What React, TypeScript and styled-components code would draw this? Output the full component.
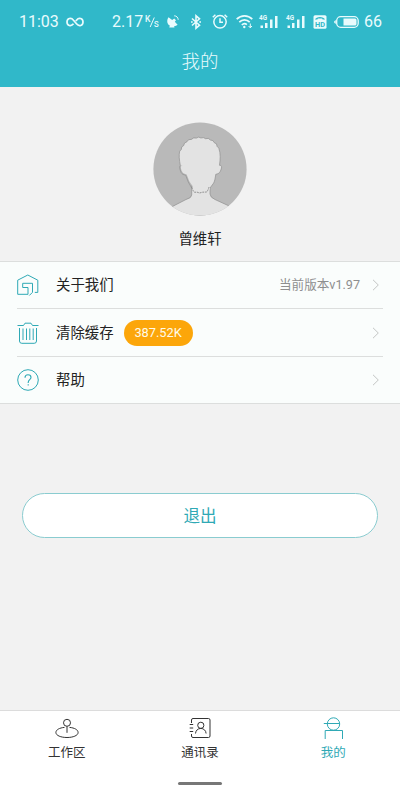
import React from 'react';
import styled, { createGlobalStyle } from 'styled-components';

const TEAL = '#2fa9b5';

const GlobalStyle = createGlobalStyle`
  * { box-sizing: border-box; }
  body {
    margin: 0;
    background: #f2f2f2;
    font-family: Roboto, "Noto Sans CJK SC", sans-serif;
    color: #222;
  }
`;

const Screen = styled.div`
  width: 400px;
  height: 800px;
  display: flex;
  flex-direction: column;
  overflow: hidden;
  background: #f2f2f2;
`;

const Header = styled.header`
  height: 87px;
  flex: none;
  background: #30b8c9;
  color: #e9fbfd;
`;

const StatusBar = styled.div`
  height: 43px;
  display: flex;
  align-items: center;
  padding-left: 19px;
`;

const StatusItem = styled.span<{ $width: number; $gap?: number }>`
  flex: none;
  width: ${p => p.$width}px;
  margin-left: ${p => p.$gap ?? 0}px;
  font-size: 16px;
  line-height: 19px;
  white-space: nowrap;
  svg { display: block; overflow: visible; }
`;

const Title = styled.h1`
  margin: 0;
  height: 38px;
  line-height: 38px;
  text-align: center;
  font-size: 18.5px;
  font-weight: 300;
`;

const Profile = styled.section`
  height: 174px;
  flex: none;
  padding-top: 35px;
  display: flex;
  flex-direction: column;
  align-items: center;
  svg { display: block; }
`;

const Name = styled.div`
  margin-top: 13px;
  line-height: 22px;
  font-size: 14.4px;
`;

const Menu = styled.ul`
  margin: 0;
  padding: 0 17px;
  height: 143px;
  flex: none;
  list-style: none;
  background: #fafdfc;
  border-top: 1px solid #dcdedd;
  border-bottom: 1px solid #dcdedd;
`;

const MenuRow = styled.li`
  height: 48px;
  display: flex;
  align-items: center;
  &:first-child { height: 46px; }
  & + & { border-top: 1px solid #dcdedd; }
  & + & + & { height: 47px; }
`;

const MenuIcon = styled.span`
  width: 39px;
  flex: none;
  svg { display: block; }
`;

const MenuLabel = styled.span`
  padding-top: 2px;
  font-size: 14.4px;
  line-height: 20px;
`;

const Badge = styled.span`
  margin-left: 10px;
  width: 69px;
  height: 26px;
  border-radius: 13px;
  background: #fca60a;
  color: #fffbe9;
  font-size: 12.8px;
  line-height: 26px;
  text-align: center;
`;

const RowEnd = styled.span`
  margin-left: auto;
  padding-right: 3px;
  display: flex;
  align-items: center;
  gap: 12px;
  font-size: 12.6px;
  line-height: 18px;
  color: #8e8e8e;
`;

const LogoutButton = styled.button`
  margin: 89px 22px 0;
  height: 45px;
  flex: none;
  border: 1px solid #8accd0;
  border-radius: 23px;
  background: #fff;
  color: ${TEAL};
  font: 16.6px/43px Roboto, "Noto Sans CJK SC", sans-serif;
  padding: 1px 0 0;
`;

const Footer = styled.footer`
  margin-top: auto;
  height: 90px;
  flex: none;
  background: #fff;
  border-top: 1px solid #dcdcdc;
`;

const Tabs = styled.nav`
  height: 71px;
  display: grid;
  grid-template-columns: repeat(3, 1fr);
`;

const Tab = styled.div<{ $active?: boolean }>`
  display: flex;
  flex-direction: column;
  align-items: center;
  padding-top: 5px;
  color: ${p => (p.$active ? TEAL : '#333')};
  font-size: 12.5px;
  line-height: 20px;
  svg { display: block; margin-bottom: 3px; }
`;

const HomeBar = styled.div`
  width: 44px;
  height: 3px;
  margin: 0 auto;
  border-radius: 2px;
  background: #777;
`;

const Chevron = () => (
  <svg width="8" height="12" viewBox="0 0 8 12" fill="none" stroke="#c3c5c4" strokeWidth="1">
    <path d="M1 .8 6.3 6 1 11.2" />
  </svg>
);

const InfinityIcon = () => (
  <svg width="18" height="10" viewBox="0 0 18 10" fill="none" stroke="currentColor" strokeWidth="1.7">
    <path d="M7.500 6.800C5 10 1 8.600 1 5s4-5 6.500-1.800l3 3.600C13 10 17 8.600 17 5s-4-5-6.500-1.800L9.800 4.100" />
  </svg>
);

const SpeedUnit = () => (
  <svg width="15" height="16" viewBox="0 0 15 16" fill="currentColor">
    <text x="0" y="8.200" fontSize="8.500" fontWeight="500">K</text>
    <path d="M9.300 3.500 5.200 13" stroke="currentColor" strokeWidth="1" />
    <text x="8.800" y="12.800" fontSize="10">s</text>
  </svg>
);

const SatelliteIcon = () => (
  <svg width="12" height="13" viewBox="0 0 12 13" fill="currentColor">
    <path d="M1.500 2.200C-.7 5.400.2 9.300 2.800 10.600L2.300 12.500h5.200l-.4-1.300c1.400 0 2.600-.5 3.500-1.400L7.800 6.800 9 5.300 7.200 3.500 5.200 5.100z" />
    <path d="M7.200.8c2.300 0 4 1.700 4 4" fill="none" stroke="currentColor" />
  </svg>
);

const BluetoothIcon = () => (
  <svg width="10" height="14" viewBox="0 0 10 14" fill="none" stroke="currentColor" strokeWidth="1.6">
    <path d="m1 3.500 7.500 6.700-3.500 3V.8l3.500 3L1 10.500" />
    <path d="M0 7h1.700M8.300 7H10" />
  </svg>
);

const ClockIcon = () => (
  <svg width="16" height="15" viewBox="0 0 16 15" fill="none" stroke="currentColor" strokeWidth="1.5">
    <circle cx="8" cy="7.800" r="6.200" />
    <path d="M8 4.300v4h3M.8 3.200 3.400.8M15.200 3.200 12.600.8" />
  </svg>
);

const WifiIcon = () => (
  <svg width="17" height="15" viewBox="0 0 17 15" fill="none" stroke="currentColor" strokeWidth="1.7">
    <path d="M.7 5.200c4.500-4.500 11.100-4.500 15.600 0M3.300 8.200c3-3 7.400-3 10.400 0M5.800 11c1.600-1.500 3.600-1.500 5.100-.3" />
    <circle cx="8.300" cy="13" r="1.200" fill="currentColor" stroke="none" />
    <path d="M14.300 9.500v4.300M12.600 12l1.700 1.800 1.700-1.800" strokeWidth="1" />
  </svg>
);

const SignalIcon = () => (
  <svg width="20" height="14" viewBox="0 0 20 14" fill="currentColor">
    <text x="0" y="5.200" fontSize="6.500" fontWeight="700" textLength="8" lengthAdjust="spacingAndGlyphs">4G</text>
    <rect x="1.500" y="10.500" width="2.500" height="2.500" />
    <rect x="6" y="8" width="2.500" height="5" />
    <rect x="11" y="4.500" width="2.500" height="8.500" />
    <rect x="16" y="1" width="2.500" height="12" />
  </svg>
);

const HdIcon = () => (
  <svg width="14" height="14" viewBox="0 0 14 14">
    <rect x=".5" y=".3" width="13" height="13.400" rx="1.500" fill="currentColor" />
    <path d="M2 4.600c1-3.600 9-3.600 10 0H9.700L9 3.400H5l-.7 1.200z" fill="#30b8c9" />
    <text x="2" y="12.300" fontSize="8" fontWeight="700" fill="#30b8c9" textLength="10" lengthAdjust="spacingAndGlyphs">HD</text>
  </svg>
);

const BatteryIcon = () => (
  <svg width="25" height="12" viewBox="0 0 25 12">
    <rect x="2.700" y=".7" width="21.500" height="10.600" rx="4" fill="none" stroke="currentColor" strokeWidth="1.300" />
    <path d="M1.800 4v4L.2 6.800V5.200z" fill="currentColor" />
    <path d="M9.500 2.400H21q1.500 0 1.500 1.500v4.200q0 1.500-1.500 1.500H9.500z" fill="currentColor" />
  </svg>
);

const Avatar = () => (
  <svg width="94" height="94" viewBox="0 0 94 94">
    <defs>
      <clipPath id="avatar-circle"><circle cx="47" cy="47" r="46.600" /></clipPath>
    </defs>
    <g clipPath="url(#avatar-circle)">
      <rect width="94" height="94" fill="#b9b9b9" />
      <path
        d="M16 86.500 20 84.200 33 77.500q5.500-1.500 5.700-4.500V64l18.300-1v9q.3 3.500 5 5.500l13.500 6.200L80 86.500V94H16z"
        fill="#e3e3e3" stroke="#8f8f8f" strokeWidth=".7"
      />
      <path
        d="M27.300 43.500C26.300 38 25.700 33 26.700 29.200l1.600-1.700.4-2.500 2-1.500.8-2.400 2.500-1.400 1.600-2 2.800-.3 2.300-1.500 2.600.2 2.400-1 2.200.9 2.500-.4 2.200 1.100 2.700-.3 2.200 1.700 2.400.5 1.300 2 2.300 1.300.6 2.500 1.700 1.700c2 5.500 1.500 11.500.7 17.200 2.800-.2 2.400 2.700.8 6-.8 1.900-2.600 2.700-4.500 3-.6 3.800-1 6.500-2.100 8.700l-4 5.500c-.4 1.600-.8 2.900-1.800 3.800l-2.200.3-2.700.8-2-.8-2.500.2-1.800-1-1.600.3c-1.200-2-1.500-4-2.400-5.900l-3.400-5-2.600-6.800c-2-.5-3.600-.8-4.500-2.600-1.700-4-2-6.200.6-6.300z"
        fill="#e3e3e3"
      />
      <path
        d="M38.700 66 35.300 60l-2.600-6.800c-2-.5-3.600-.8-4.500-2.600-1.700-4-2-6.200-.9-7.100C26.300 38 25.700 33 26.700 29.200l1.600-1.700.4-2.500 2-1.500.8-2.400 2.500-1.400 1.600-2 2.800-.3 2.300-1.500 2.600.2 2.400-1 2.200.9 2.500-.4 2.200 1.100 2.700-.3 2.200 1.700 2.400.5 1.300 2 2.300 1.300.6 2.500 1.700 1.700c2 5.500 1.500 11.500.7 17.200 2.800-.2 2.400 2.700.8 6-.8 1.900-2.600 2.700-4.500 3-.6 3.800-1 6.500-2.100 8.700L57 66"
        fill="none" stroke="#8f8f8f" strokeWidth=".7"
      />
      <path d="M38.700 65q1 3.500 2.800 5.300l2.500-.2 2.500.9 3-.8 4.200-.2q1.500-2 2.300-5" fill="none" stroke="#8a8a8a" strokeWidth=".9" strokeDasharray="2 .8" />
    </g>
  </svg>
);

const AboutIcon = () => (
  <svg width="22" height="22" viewBox="0 0 22 22" fill="none" stroke={TEAL} strokeWidth="1">
    <path d="M5.700 13.500H11v6.800H.7V6.200L10.800 1l10 5.200v12.200h-3" />
    <path d="M5.700 13.500V9.300h9.800v9L12.300 21.500" />
  </svg>
);

const TrashIcon = () => (
  <svg width="22" height="22" viewBox="0 0 22 22" fill="none" stroke={TEAL} strokeWidth="1">
    <path d="M.5 3.500h6L8 1.200h6l1.500 2.300h6M2.500 6v13q0 2.300 2.300 2.300h12.400q2.300 0 2.300-2.300V6M6 6.500v11.500M9.500 6.500v11.500M12.800 6.500v11.500M16.200 6.500v11.500" />
  </svg>
);

const HelpIcon = () => (
  <svg width="22" height="22" viewBox="0 0 22 22" fill="none" stroke={TEAL} strokeWidth="1">
    <circle cx="11" cy="11" r="10.300" />
    <path d="M8 8.700C8 6.700 9.200 5.700 11 5.700s3 1.100 3 2.700c0 2.200-2.800 2.400-2.800 5v.7M11.200 15.300v1.200" strokeWidth="1.100" />
  </svg>
);

const WorkIcon = () => (
  <svg width="24" height="24" viewBox="0 0 24 24" fill="none" stroke="currentColor" strokeWidth="1">
    <circle cx="12" cy="6.800" r="3.500" />
    <path d="M12 10.300v6.500M9.500 11.400C4.500 11.800.9 13.800.9 16.500c0 3 5 5 11.100 5s11.100-2 11.100-5c0-2.700-3.600-4.700-8.600-5.100" />
  </svg>
);

const ContactsIcon = () => (
  <svg width="24" height="24" viewBox="0 0 24 24" fill="none" stroke="currentColor" strokeWidth="1">
    <path d="M3.500 7V4q0-1.500 1.500-1.500h15.500q1.500 0 1.500 1.500v16q0 1.500-1.500 1.500H5q-1.500 0-1.500-1.500v-2M1.700 8.500h3.500M1.700 12h3.500M1.700 15.500h3.500" />
    <circle cx="12.800" cy="9.300" r="3.100" />
    <path d="M7.500 17.500c.2-3 2.300-5 5.300-5.100 3 .1 5.100 2.100 5.300 5.100" />
  </svg>
);

const MeIcon = () => (
  <svg width="24" height="24" viewBox="0 0 24 24" fill="none" stroke="currentColor" strokeWidth="1">
    <path d="M2.800 7.500h15.700M4.200 23v-8.500h17.300V23" />
    <circle cx="12.500" cy="8" r="6.200" />
  </svg>
);

export default function App() {
  return (
    <>
      <GlobalStyle />
      <Screen>
        <Header>
          <StatusBar>
            <StatusItem $width={40}>11:03</StatusItem>
            <StatusItem $width={18} $gap={7}><InfinityIcon /></StatusItem>
            <StatusItem $width={31} $gap={28}>2.17</StatusItem>
            <StatusItem $width={15} $gap={2}><SpeedUnit /></StatusItem>
            <StatusItem $width={12} $gap={7}><SatelliteIcon /></StatusItem>
            <StatusItem $width={10} $gap={12}><BluetoothIcon /></StatusItem>
            <StatusItem $width={16} $gap={11}><ClockIcon /></StatusItem>
            <StatusItem $width={17} $gap={8}><WifiIcon /></StatusItem>
            <StatusItem $width={20} $gap={6}><SignalIcon /></StatusItem>
            <StatusItem $width={20} $gap={7}><SignalIcon /></StatusItem>
            <StatusItem $width={14} $gap={7}><HdIcon /></StatusItem>
            <StatusItem $width={25} $gap={7}><BatteryIcon /></StatusItem>
            <StatusItem $width={20} $gap={5}>66</StatusItem>
          </StatusBar>
          <Title>我的</Title>
        </Header>

        <Profile>
          <Avatar />
          <Name>曾维轩</Name>
        </Profile>

        <Menu>
          <MenuRow>
            <MenuIcon><AboutIcon /></MenuIcon>
            <MenuLabel>关于我们</MenuLabel>
            <RowEnd>当前版本v1.97<Chevron /></RowEnd>
          </MenuRow>
          <MenuRow>
            <MenuIcon><TrashIcon /></MenuIcon>
            <MenuLabel>清除缓存</MenuLabel>
            <Badge>387.52K</Badge>
            <RowEnd><Chevron /></RowEnd>
          </MenuRow>
          <MenuRow>
            <MenuIcon><HelpIcon /></MenuIcon>
            <MenuLabel>帮助</MenuLabel>
            <RowEnd><Chevron /></RowEnd>
          </MenuRow>
        </Menu>

        <LogoutButton>退出</LogoutButton>

        <Footer>
          <Tabs>
            <Tab><WorkIcon />工作区</Tab>
            <Tab><ContactsIcon />通讯录</Tab>
            <Tab $active><MeIcon />我的</Tab>
          </Tabs>
          <HomeBar />
        </Footer>
      </Screen>
    </>
  );
}
